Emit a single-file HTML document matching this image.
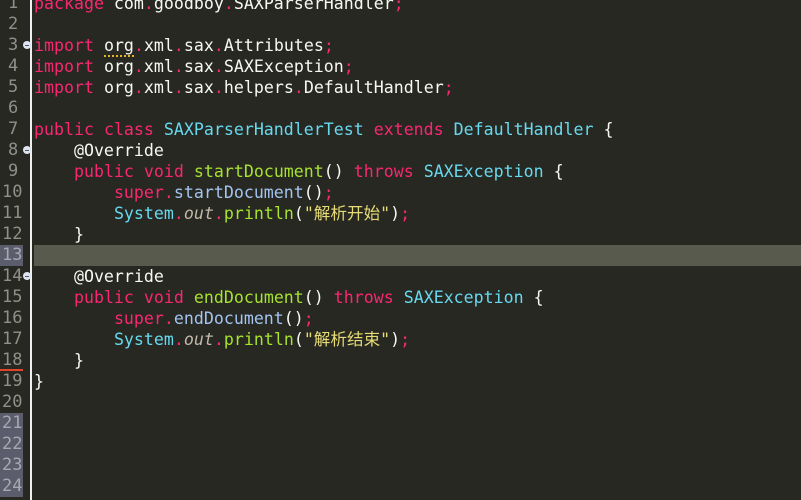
<!DOCTYPE html>
<html><head><meta charset="utf-8"><style>
html,body{margin:0;padding:0;width:801px;height:500px;overflow:hidden;background:#272822;}
.wrap{position:relative;width:801px;height:500px;font-family:"DejaVu Sans Mono","Noto Sans CJK SC",monospace;font-size:16.6px;}
.ln{position:absolute;left:0;width:30px;height:21px;line-height:21px;color:#8f908a;font-size:17px;}
.ln span{display:block;width:21px;padding-left:2px;height:21px;}
.ln.one span{padding-left:8px;width:15px}
.sel span{background:#5c5d6c;color:#a8a8b0;}
.code{position:absolute;left:34px;height:21px;line-height:21px;white-space:pre;color:#f8f8f2;}
.k{color:#f92672}.t{color:#66d9ef}.f{color:#a6e22e}.s{color:#e6db74}.m{color:#a3c4f0}.i{color:#c0b8a8;font-style:italic}
.div{position:absolute;left:30px;top:0;width:2px;height:500px;background:#f0f0f0;}
.hl{position:absolute;left:34px;top:245px;width:767px;height:21px;background:#595a4e;}
.fold{position:absolute;left:23px;width:8px;height:8px;border-radius:50%;background:#dde6ee;}
.fold:after{content:"";position:absolute;left:2px;top:3.5px;width:4px;height:1px;background:#556;}
</style></head><body><div class="wrap">
<div class="hl"></div>
<div class="div"></div>
<div class="ln one" style="top:-7px"><span>1</span></div>
<div class="ln one" style="top:14px"><span>2</span></div>
<div class="ln one" style="top:35px"><span>3</span></div>
<div class="ln one" style="top:56px"><span>4</span></div>
<div class="ln one" style="top:77px"><span>5</span></div>
<div class="ln one" style="top:98px"><span>6</span></div>
<div class="ln one" style="top:119px"><span>7</span></div>
<div class="ln one" style="top:140px"><span>8</span></div>
<div class="ln one" style="top:161px"><span>9</span></div>
<div class="ln" style="top:182px"><span>10</span></div>
<div class="ln" style="top:203px"><span>11</span></div>
<div class="ln" style="top:224px"><span>12</span></div>
<div class="ln sel" style="top:245px"><span>13</span></div>
<div class="ln" style="top:266px"><span>14</span></div>
<div class="ln" style="top:287px"><span>15</span></div>
<div class="ln" style="top:308px"><span>16</span></div>
<div class="ln" style="top:329px"><span>17</span></div>
<div class="ln" style="top:350px"><span style="border-bottom:2px solid #e0452a;height:19px">18</span></div>
<div class="ln" style="top:371px"><span>19</span></div>
<div class="ln" style="top:392px"><span>20</span></div>
<div class="ln sel" style="top:413px"><span>21</span></div>
<div class="ln sel" style="top:434px"><span>22</span></div>
<div class="ln sel" style="top:455px"><span>23</span></div>
<div class="ln sel" style="top:476px"><span>24</span></div>
<div class="fold" style="top:41px"></div>
<div class="fold" style="top:146px"></div>
<div class="fold" style="top:272px"></div>
<div class="code" style="top:-7px"><span class="k">package</span> com<span class="k">.</span>goodboy<span class="k">.</span>SAXParserHandler<span class="k">;</span></div>
<div class="code" style="top:35px"><span class="k">import</span> <span style="border-bottom:2px dotted #e6b422">org</span><span class="k">.</span>xml<span class="k">.</span>sax<span class="k">.</span>Attributes<span class="k">;</span></div>
<div class="code" style="top:56px"><span class="k">import</span> org<span class="k">.</span>xml<span class="k">.</span>sax<span class="k">.</span>SAXException<span class="k">;</span></div>
<div class="code" style="top:77px"><span class="k">import</span> org<span class="k">.</span>xml<span class="k">.</span>sax<span class="k">.</span>helpers<span class="k">.</span>DefaultHandler<span class="k">;</span></div>
<div class="code" style="top:119px"><span class="k">public</span> <span class="k">class</span> <span class="t">SAXParserHandlerTest</span> <span class="k">extends</span> <span class="t">DefaultHandler</span> {</div>
<div class="code" style="top:140px">    @Override</div>
<div class="code" style="top:161px">    <span class="k">public</span> <span class="k">void</span> <span class="f">startDocument</span>() <span class="k">throws</span> <span class="t">SAXException</span> {</div>
<div class="code" style="top:182px">        <span class="k">super</span><span class="k">.</span><span class="m">startDocument</span>()<span class="k">;</span></div>
<div class="code" style="top:203px">        <span class="t">System</span><span class="k">.</span><span class="i">out</span><span class="k">.</span><span class="f">println</span>(<span class="s">"解析开始"</span>)<span class="k">;</span></div>
<div class="code" style="top:224px">    }</div>
<div class="code" style="top:266px">    @Override</div>
<div class="code" style="top:287px">    <span class="k">public</span> <span class="k">void</span> <span class="f">endDocument</span>() <span class="k">throws</span> <span class="t">SAXException</span> {</div>
<div class="code" style="top:308px">        <span class="k">super</span><span class="k">.</span><span class="m">endDocument</span>()<span class="k">;</span></div>
<div class="code" style="top:329px">        <span class="t">System</span><span class="k">.</span><span class="i">out</span><span class="k">.</span><span class="f">println</span>(<span class="s">"解析结束"</span>)<span class="k">;</span></div>
<div class="code" style="top:350px">    }</div>
<div class="code" style="top:371px">}</div>
</div></body></html>
